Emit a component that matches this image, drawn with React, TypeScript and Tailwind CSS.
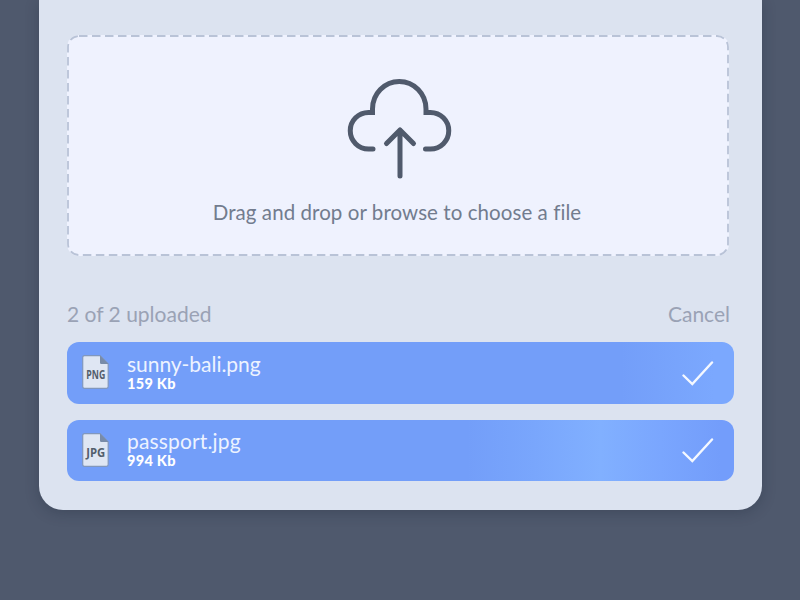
import React from 'react';

type UploadedFile = { name: string; size: string; kind: string; fill: string; nameStyle: string };

const files: UploadedFile[] = [
  {
    name: 'sunny-bali.png',
    size: '159 Kb',
    kind: 'PNG',
    fill: 'bg-[linear-gradient(90deg,#739ef9_0%,#739ef9_83%,#7ba8fe_97%,#7ba8fe_100%)]',
    nameStyle: 'tracking-[-0.04px]',
  },
  {
    name: 'passport.jpg',
    size: '994 Kb',
    kind: 'JPG',
    fill: 'bg-[linear-gradient(90deg,#739ef9_0%,#739ef9_60%,#79a6fc_70%,#81b0ff_80%,#7aa6fe_89%,#739dfb_98%)]',
    nameStyle: 'tracking-[0.15px]',
  },
];

function CloudUpload() {
  return (
    <svg className="ml-1 block h-[104px] w-[108px]" viewBox="346 77 108 104" fill="none" stroke="#505a6c" strokeWidth="5" strokeLinecap="round">
      <path d="M373 149H368.500A18.250 18.250 0 0 1 368.500 112.500H372.500V109A26.750 27.500 0 0 1 426 109V112.500H430.500A18.250 18.250 0 0 1 430.500 149H425.500" />
      <path d="M400 176V130M386.500 143.500L400 130L413.500 143.500" strokeLinejoin="round" />
    </svg>
  );
}

function FileIcon({ kind }: { kind: string }) {
  return (
    <svg className="-mt-px block h-[34px] w-[27px] shrink-0 overflow-visible" viewBox="0 0 27 34">
      <path d="M2.500 .7H18L26.200 9V31.500Q26.200 33.300 24.400 33.300H2.500Q.7 33.300 .7 31.500V2.500Q.7 .7 2.500 .7Z" fill="#dfe6f3" stroke="#8197bd" strokeWidth="1.200" />
      <path d="M18 .5L26.500 9H19.200Q18 9 18 7.800Z" fill="#788ba9" />
      <text x="13.800" y="23.800" textAnchor="middle" textLength="19" lengthAdjust="spacingAndGlyphs" fill="#535e6d" fontFamily="'Open Sans', sans-serif" fontWeight="700" fontSize="12">{kind}</text>
    </svg>
  );
}

function FileRow({ file }: { file: UploadedFile }) {
  return (
    <li className={`flex h-[61.500px] w-[666.500px] items-center rounded-xl pl-[15px] pr-[19.500px] text-white ${file.fill}`}>
      <FileIcon kind={file.kind} />
      <div className="-mt-px ml-[18px] flex-1">
        <p className={`text-[21px] leading-[22px] text-[#edf3ff] ${file.nameStyle}`}>{file.name}</p>
        <p className="text-[14.500px] font-black leading-[17px] tracking-[0.3px]">{file.size}</p>
      </div>
      <svg className="h-[26px] w-[32px]" viewBox="0 0 32 26" fill="none" stroke="#f4f8ff" strokeWidth="2.400" strokeLinecap="round">
        <path d="M1.500 15.500L10.300 24L30 2.500" />
      </svg>
    </li>
  );
}

export default function App() {
  return (
    <main className="h-[600px] w-[800px] overflow-hidden bg-[#4f596d] pl-[39px] font-['Lato',sans-serif]">
      <section className="h-[510px] w-[723px] rounded-b-[24px] bg-[#dce3f0] pl-7 pt-[35px] shadow-[0_3px_14px_rgba(25,35,55,0.28)]">
        <div className="relative flex h-[221px] w-[662px] flex-col items-center rounded-xl bg-[#eff2fe] pt-[42px]">
          <svg className="absolute inset-0 h-full w-full" fill="none">
            <rect x="1" y="1" width="660" height="219" rx="11" stroke="#b9c3d7" strokeWidth="1.800" strokeDasharray="8.500 4.500" />
          </svg>
          <CloudUpload />
          <p className="-ml-0.5 mt-[19px] whitespace-nowrap text-[20.500px] leading-6 tracking-[0.07px] text-[#727c8e]">Drag and drop or browse to choose a file</p>
        </div>
        <div className="mt-[46px] flex h-6 w-[663px] justify-between text-[21px] leading-6 text-[#9aa2b5]">
          <span>2 of 2 uploaded</span>
          <button type="button" className="leading-6">Cancel</button>
        </div>
        <ul className="mt-4 flex flex-col gap-4">
          {files.map((file) => <FileRow key={file.name} file={file} />)}
        </ul>
      </section>
    </main>
  );
}
